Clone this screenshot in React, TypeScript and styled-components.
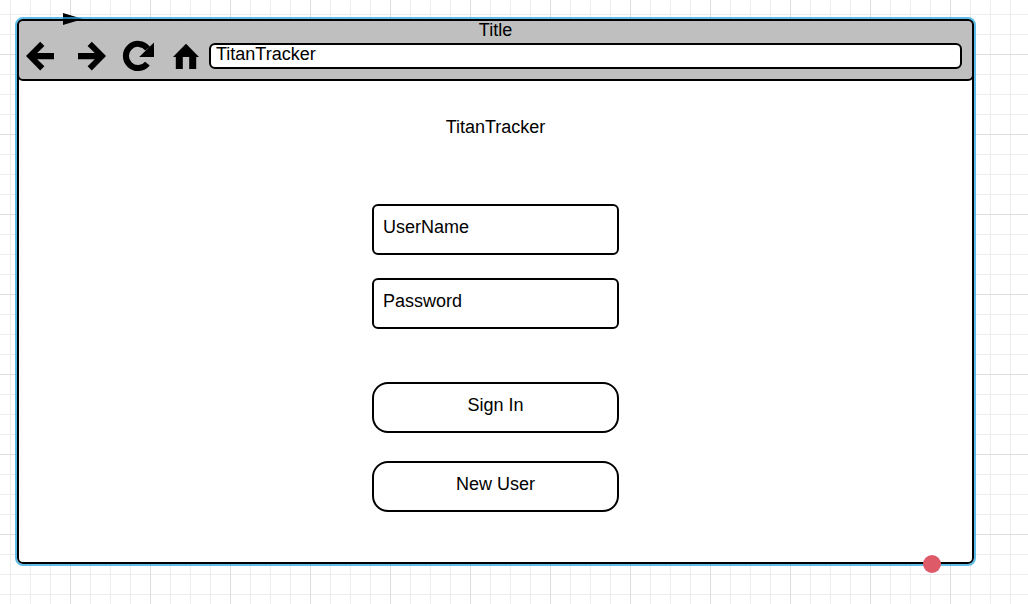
import React from "react";
import styled, { createGlobalStyle, css } from "styled-components";

const GlobalStyle = createGlobalStyle`
  *, *::before, *::after {
    box-sizing: border-box;
  }

  body {
    margin: 0;
    background: #fff;
    color: #000;
    font: 18px/20px "Liberation Sans", Arial, sans-serif;
  }
`;

const MAJOR = "#dedede";
const MINOR = "#ededed";

const Canvas = styled.div`
  min-height: 100vh;
  padding: 19px 54px 40px 17px;
  background-color: #fff;
  background-image:
    linear-gradient(90deg, ${MAJOR} 1px, transparent 1px),
    linear-gradient(${MAJOR} 1px, transparent 1px),
    linear-gradient(90deg, ${MINOR} 1px, transparent 1px),
    linear-gradient(${MINOR} 1px, transparent 1px);
  background-size: 80px 80px, 80px 80px, 20px 20px, 20px 20px;
  background-position: 70px 54px, 70px 54px, 10px 14px, 10px 14px;
`;

const outlined = css`
  border: 2px solid #000;
  border-radius: 6px;
`;

const BrowserWindow = styled.section`
  ${outlined}
  position: relative;
  background: #fff;

  &::after {
    content: "";
    position: absolute;
    inset: -4px;
    border: 2px solid rgba(40, 166, 222, 0.75);
    border-radius: 8px;
    pointer-events: none;
  }
`;

const Header = styled.header`
  ${outlined}
  margin: -2px;
  background: #bfbfbf;
`;

const WindowTitle = styled.div`
  line-height: 18px;
  text-align: center;
`;

const Toolbar = styled.div`
  display: flex;
  align-items: center;
  padding: 1px 10px 7px 3px;
`;

const Nav = styled.nav`
  display: flex;
  margin-right: 3px;
`;

const NavButton = styled.button`
  width: 46px;
  height: 32px;
  padding: 0;
  border: 0;
  background: none;
  color: #000;

  svg {
    display: block;
  }
`;

const AddressInput = styled.input`
  ${outlined}
  flex: 1;
  min-width: 0;
  height: 26px;
  padding: 0 5px 4px;
  background: #fff;
  color: inherit;
  font: inherit;
`;

const Login = styled.form`
  display: flex;
  flex-direction: column;
  align-items: center;
  padding: 38px 16px 50px;
`;

const Heading = styled.h1`
  margin: 0 0 67px;
  font-size: 18px;
  font-weight: 400;
  line-height: 20px;
`;

const Stack = styled.div<{ $gap: number }>`
  display: flex;
  flex-direction: column;
  gap: ${({ $gap }) => $gap}px;
  width: 100%;
  max-width: 247px;

  & + & {
    margin-top: 53px;
  }
`;

const Field = styled.input`
  ${outlined}
  width: 100%;
  height: 51px;
  padding: 0 9px 4px;
  background: #fff;
  color: inherit;
  font: inherit;

  &::placeholder {
    color: #000;
    opacity: 1;
  }
`;

const ActionButton = styled.button`
  ${outlined}
  width: 100%;
  height: 51px;
  padding: 0 0 5px;
  border-radius: 16px;
  background: #fff;
  color: inherit;
  font: inherit;
`;

const LinkArrow = styled.svg`
  position: absolute;
  top: -8px;
  left: 44px;
`;

const Marker = styled.span`
  position: absolute;
  z-index: 1;
  right: 31px;
  bottom: -11px;
  width: 18px;
  height: 18px;
  border-radius: 50%;
  background: #df5a69;
`;

/* The four glyphs share one coordinate space; each shows its own slice. */
const Icon = ({ x, children }: { x: number; children: React.ReactNode }) => (
  <svg width="46" height="32" viewBox={`${x} 40 46 32`} fill="currentColor" aria-hidden="true">
    {children}
  </svg>
);

export default function App() {
  return (
    <>
      <GlobalStyle />
      <Canvas>
        <BrowserWindow>
          <Header>
            <WindowTitle>Title</WindowTitle>
            <Toolbar>
              <Nav aria-label="Browser">
                <NavButton type="button" aria-label="Back">
                  <Icon x={22}>
                    <path d="M26 56 40.2 41.8 44.4 46 37.2 53H54V59.2H37.2L44.4 66.2 40.2 70.4Z" />
                  </Icon>
                </NavButton>
                <NavButton type="button" aria-label="Forward">
                  <Icon x={68}>
                    <path d="M106 56 91.8 41.8 87.6 46 94.8 53H78V59.2H94.8L87.6 66.2 91.8 70.4Z" />
                  </Icon>
                </NavButton>
                <NavButton type="button" aria-label="Reload">
                  <Icon x={114}>
                    <path
                      d="M147.6 48.6A12.1 12.1 0 1 0 147.4 63.6"
                      fill="none"
                      stroke="currentColor"
                      strokeWidth="6"
                    />
                    <path d="M154 42.6V57H139.2Z" />
                  </Icon>
                </NavButton>
                <NavButton type="button" aria-label="Home">
                  <Icon x={160}>
                    <path d="M186 43.8 199 57H196.2V69H189.2V57H182.8V69H175.8V57H173Z" />
                  </Icon>
                </NavButton>
              </Nav>
              <AddressInput aria-label="Address" defaultValue="TitanTracker" />
            </Toolbar>
          </Header>
          <Login onSubmit={(event) => event.preventDefault()}>
            <Heading>TitanTracker</Heading>
            <Stack $gap={23}>
              <Field aria-label="UserName" placeholder="UserName" autoComplete="username" />
              <Field
                aria-label="Password"
                placeholder="Password"
                type="password"
                autoComplete="current-password"
              />
            </Stack>
            <Stack $gap={28}>
              <ActionButton type="submit">Sign In</ActionButton>
              <ActionButton type="button">New User</ActionButton>
            </Stack>
          </Login>
          <LinkArrow width="20" height="12" viewBox="0 0 20 12" aria-hidden="true">
            <path d="M0 0 20 6 0 12Z" />
          </LinkArrow>
          <Marker />
        </BrowserWindow>
      </Canvas>
    </>
  );
}
